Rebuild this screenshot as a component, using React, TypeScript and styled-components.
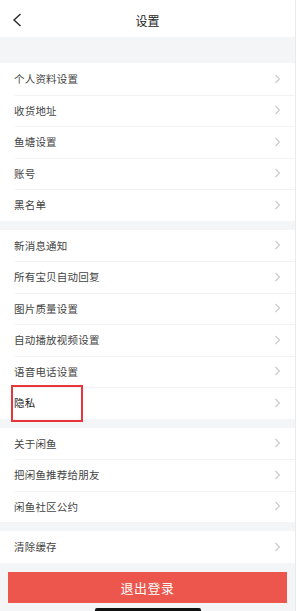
import React from "react";
import styled, { createGlobalStyle } from "styled-components";

const Global = createGlobalStyle`
  html, body { margin: 0; padding: 0; background: #ffffff; }
  body { font-family: "Noto Sans CJK SC", "Noto Sans", sans-serif; }
  * { box-sizing: border-box; }
`;

const Page = styled.div`
  width: 296px;
  height: 611px;
  background: #f4f5f7;
  border-right: 1px solid #e9eaec;
  display: flex;
  flex-direction: column;
  position: relative;
  overflow: hidden;
`;

const Header = styled.div`
  height: 37px;
  background: #fff;
  display: grid;
  grid-template-columns: 40px 1fr 40px;
  align-items: center;
`;

const BackBtn = styled.div`
  display: flex;
  align-items: center;
  padding-left: 12px;
  padding-top: 2px;
`;

const Title = styled.div`
  text-align: center;
  font-size: 12px;
  color: #222;
  padding-top: 3px;
`;

const Spacer = styled.div<{ $h: number }>`
  height: ${(p) => p.$h}px;
  flex: none;
`;

const Group = styled.div`
  background: #fff;
  display: flex;
  flex-direction: column;
`;

const Row = styled.div<{ $first?: boolean }>`
  height: 31.5px;
  display: flex;
  align-items: center;
  justify-content: space-between;
  padding: 0 14px 0 14px;
  position: relative;
  &::before {
    content: "";
    display: ${(p) => (p.$first ? "none" : "block")};
    position: absolute;
    top: 0;
    left: 15px;
    right: 0;
    height: 1px;
    background: #f1f2f4;
  }
`;

const Label = styled.span<{ $serif?: boolean }>`
  font-size: 10.5px;
  color: ${(p) => (p.$serif ? "#222" : "#444")};
  letter-spacing: 0.2px;
  font-family: ${(p) =>
    p.$serif
      ? `"Liberation Serif", "Noto Sans CJK SC", serif`
      : `"Noto Sans CJK SC", "Noto Sans", sans-serif`};
`;

const Highlight = styled.div`
  position: absolute;
  left: 11px;
  top: 385px;
  width: 72px;
  height: 37px;
  border: 2px solid #e8353a;
`;

const LogoutButton = styled.div`
  margin: 0 8px;
  height: 31px;
  background: #ec564c;
  color: #fff;
  font-size: 13px;
  display: flex;
  align-items: center;
  justify-content: center;
  letter-spacing: 0.5px;
`;

const HomeIndicator = styled.div`
  position: absolute;
  left: 95px;
  bottom: 0;
  width: 106px;
  height: 3px;
  background: #111;
  border-radius: 2px 2px 0 0;
`;

const Chevron = () => (
  <svg width="7" height="10" viewBox="0 0 7 10">
    <path d="M1.5 1 L5.5 5 L1.5 9" fill="none" stroke="#c9c9cc" strokeWidth="1.1" />
  </svg>
);

const BackIcon = () => (
  <svg width="11" height="14" viewBox="0 0 11 14">
    <path d="M8.5 1 L2 7 L8.5 13" fill="none" stroke="#2a2a2a" strokeWidth="1.4" />
  </svg>
);

const groups: string[][] = [
  ["个人资料设置", "收货地址", "鱼塘设置", "账号", "黑名单"],
  ["新消息通知", "所有宝贝自动回复", "图片质量设置", "自动播放视频设置", "语音电话设置", "隐私"],
  ["关于闲鱼", "把闲鱼推荐给朋友", "闲鱼社区公约"],
  ["清除缓存"],
];

export default function App() {
  return (
    <>
      <Global />
      <Page>
        <Header>
          <BackBtn>
            <BackIcon />
          </BackBtn>
          <Title>设置</Title>
          <div />
        </Header>
        <Spacer $h={26} />
        {groups.map((g, gi) => (
          <React.Fragment key={gi}>
            {gi > 0 && <Spacer $h={9} />}
            <Group>
              {g.map((item, i) => (
                <Row key={item} $first={i === 0}>
                  <Label $serif={item === "隐私"}>{item}</Label>
                  <Chevron />
                </Row>
              ))}
            </Group>
          </React.Fragment>
        ))}
        <Spacer $h={9} />
        <LogoutButton>退出登录</LogoutButton>
        <Highlight />
        <HomeIndicator />
      </Page>
    </>
  );
}
